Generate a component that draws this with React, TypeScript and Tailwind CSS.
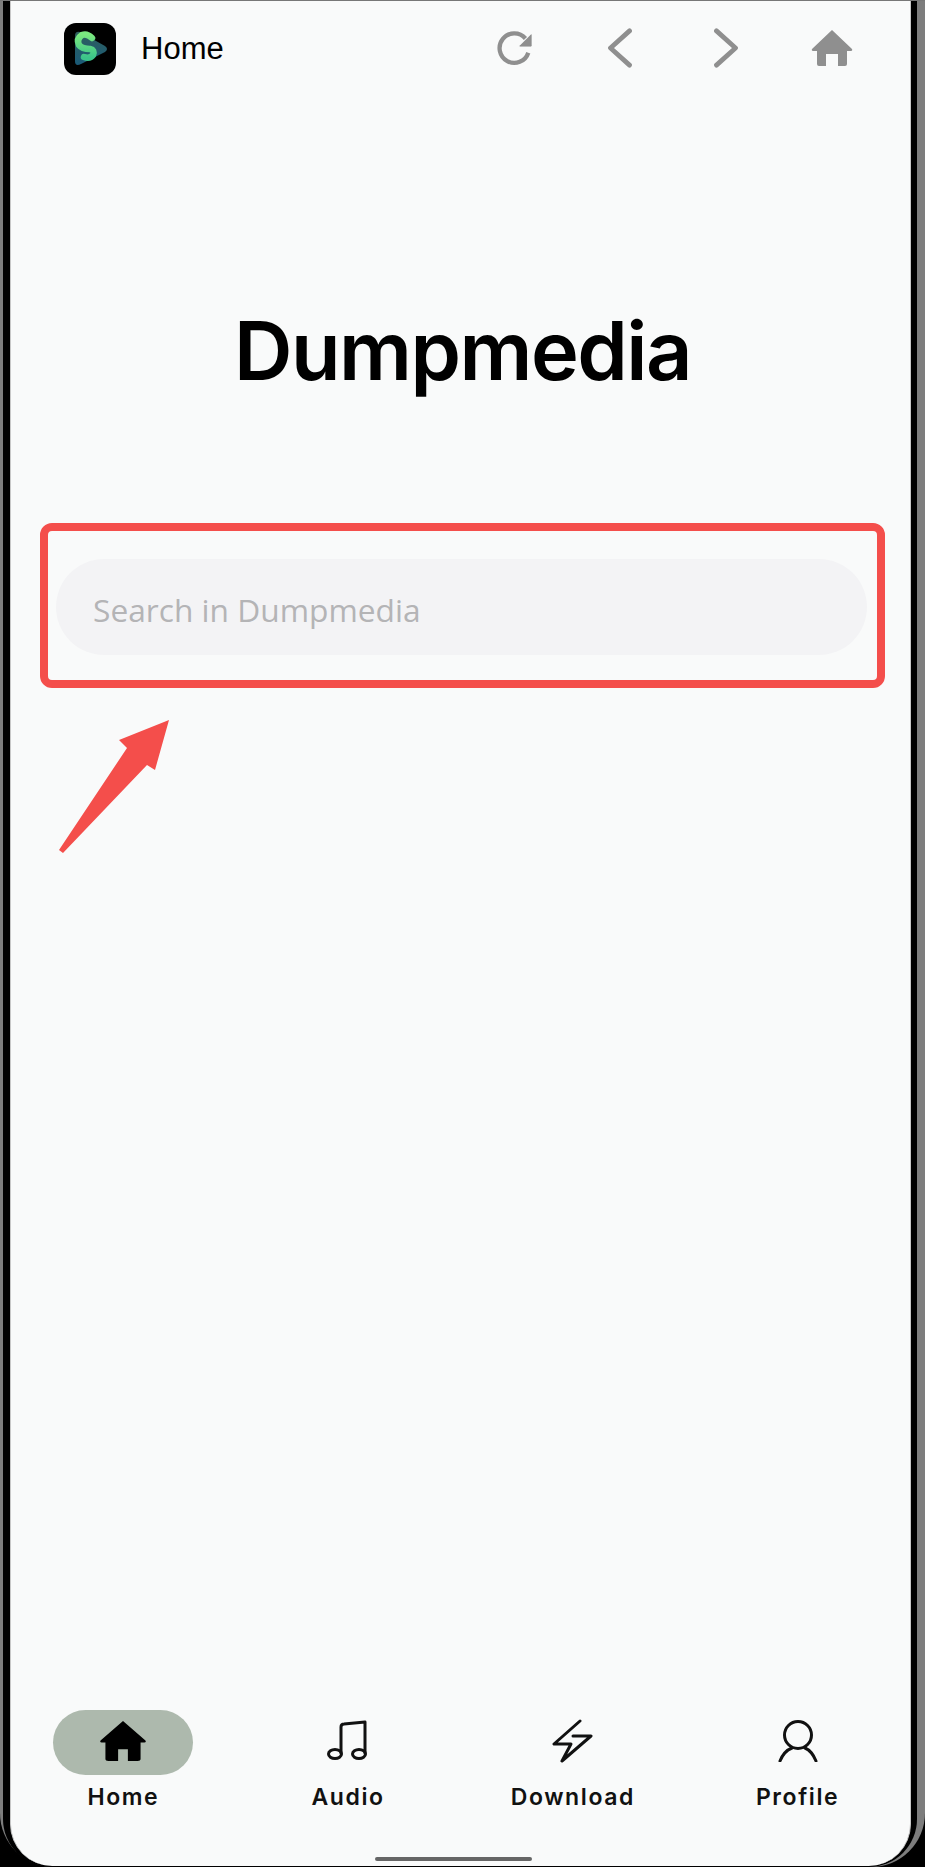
import React from 'react';

const navItems = ['Home', 'Audio', 'Download', 'Profile'];

const Logo = () => (
  <div className="w-[52px] h-[52px] rounded-[12px] bg-black flex items-center justify-center">
    <svg width="52" height="52" viewBox="0 0 52 52">
      <defs>
        <linearGradient id="tri" x1="0" y1="0" x2="0" y2="1">
          <stop offset="0" stopColor="#2f5f5c" />
          <stop offset="1" stopColor="#1a5a78" />
        </linearGradient>
        <linearGradient id="ess" x1="0" y1="0" x2="0" y2="1">
          <stop offset="0" stopColor="#7be87f" />
          <stop offset="1" stopColor="#3cc48a" />
        </linearGradient>
      </defs>
      <path d="M11 13 Q11 8 16 9 L41 23 Q45 26 41 29 L17 41 Q11 44 11 38 Z" fill="url(#tri)" />
      <path d="M28 15 Q23 10 18 12 Q12 16 15 22 Q18 26 26 26 Q31 27 29 32 Q26 36 20 34" fill="none" stroke="url(#ess)" strokeWidth="6.5" strokeLinecap="round" />
    </svg>
  </div>
);

const TopBar = () => (
  <div className="h-[95px] flex items-center pl-[53px] pr-[57px] shrink-0">
    <Logo />
    <span className="ml-[25px] text-[31px] leading-none text-black font-['Liberation_Sans',sans-serif]">Home</span>
    <div className="ml-auto flex items-center text-[#8f8f8f] pb-[2px]">
      <svg width="38" height="38" viewBox="0 0 40 40" fill="none" stroke="currentColor" strokeWidth="4.5">
        <path d="M34 25 A15.5 15.5 0 1 1 31 10" />
        <path d="M37 6 V18 H25 Z" fill="currentColor" strokeWidth="1" />
      </svg>
      <svg className="ml-[72px]" width="28" height="40" viewBox="0 0 28 42" fill="none" stroke="currentColor" strokeWidth="5" strokeLinecap="round" strokeLinejoin="round">
        <path d="M24 3 L4 21 L24 39" />
      </svg>
      <svg className="ml-[78px]" width="28" height="40" viewBox="0 0 28 42" fill="none" stroke="currentColor" strokeWidth="5" strokeLinecap="round" strokeLinejoin="round">
        <path d="M4 3 L24 21 L4 39" />
      </svg>
      <svg className="ml-[71px]" width="42" height="38" viewBox="0 0 42 38" fill="currentColor">
        <path d="M21 1 L41 20 Q42 22 39 22 H36 V35 Q36 37 34 37 H27 V25 H15 V37 H8 Q6 37 6 35 V22 H3 Q0 22 1 20 Z" />
      </svg>
    </div>
  </div>
);

const NavIcon = ({ name }: { name: string }) => {
  if (name === 'Home') {
    return (
      <svg width="48" height="41" viewBox="0 0 48 42" fill="black">
        <path d="M24 0 L47 20 Q48 22 46 22 H42 V39 Q42 41 39 41 H29 V29 H19 V41 H9 Q6 41 6 39 V22 H2 Q0 22 1 20 Z" />
      </svg>
    );
  }
  const common = { fill: 'none', stroke: '#111', strokeWidth: 3, strokeLinecap: 'round', strokeLinejoin: 'round' } as const;
  if (name === 'Audio') {
    return (
      <svg width="44" height="42" viewBox="0 0 44 42" {...common}>
        <path d="M15 33 V7 Q15 4 18 4 L39 2 V33" />
        <ellipse cx="9" cy="34" rx="6.5" ry="4.5" />
        <ellipse cx="33" cy="34" rx="6.5" ry="4.5" />
      </svg>
    );
  }
  if (name === 'Download') {
    return (
      <svg width="42" height="44" viewBox="0 0 42 44" {...common}>
        <path d="M28 2 L2 25 H19 L10 42 L39 17 H21" />
      </svg>
    );
  }
  return (
    <svg width="40" height="42" viewBox="0 0 40 42" {...common}>
      <circle cx="20" cy="15" r="13.5" />
      <path d="M2 41 Q6 31 14 28 M38 41 Q34 31 27 28" />
    </svg>
  );
};

const BottomNav = () => (
  <div className="mt-auto grid grid-cols-4 shrink-0">
    {navItems.map((name) => (
      <div key={name} className="flex flex-col items-center">
        <div className={`w-[140px] h-[65px] pb-[3px] rounded-full flex items-center justify-center ${name === 'Home' ? 'bg-[#adb9ad]' : ''}`}>
          <NavIcon name={name} />
        </div>
        <span className="mt-[9px] text-[23px] leading-[26px] font-semibold tracking-[1.6px] text-[#111] font-['Inter',sans-serif]">{name}</span>
      </div>
    ))}
  </div>
);

export default function App() {
  return (
    <div className="w-[925px] h-[1867px] bg-black overflow-hidden">
      <div className="h-full bg-[#7d7d7d] border-t border-[#777] pl-[3px] pr-[8px] rounded-b-[54px]">
        <div className="h-full bg-black pl-[7px] pr-[6px] pb-px rounded-b-[48px]">
          <div className="h-full bg-[#f9fafa] border-x border-[#c8c8c8] rounded-b-[42px] flex flex-col">
            <TopBar />
            <h1 className="mt-[205px] pl-[4px] text-center text-[81px] leading-[100px] font-semibold text-black font-['Inter',sans-serif] tracking-[-1.5px]">Dumpmedia</h1>
            <div className="mt-[122px] ml-[29px] w-[845px] h-[165px] border-[8px] border-[#f44e4b] rounded-[12px] pl-[8px] pr-[6px] pt-[28px]">
              <div className="h-[96px] w-[811px] rounded-full bg-[#f3f3f5] flex items-center pl-[37px] pt-[6px] text-[31.7px] text-[#b4b4b6] font-['Open_Sans',sans-serif]">
                Search in Dumpmedia
              </div>
            </div>
            <svg className="mt-[32px] ml-[48px]" width="112" height="134" viewBox="0 0 112 134" fill="#f44e4b">
              <path d="M110 0 L96 50 L88 45 L4 133 L0 130 L68 28 L60 20 Z" />
            </svg>
            <BottomNav />
            <div className="mt-[47px] mb-[5px] ml-[364px] w-[157px] h-[4px] bg-[#666] rounded-full shrink-0" />
          </div>
        </div>
      </div>
    </div>
  );
}
